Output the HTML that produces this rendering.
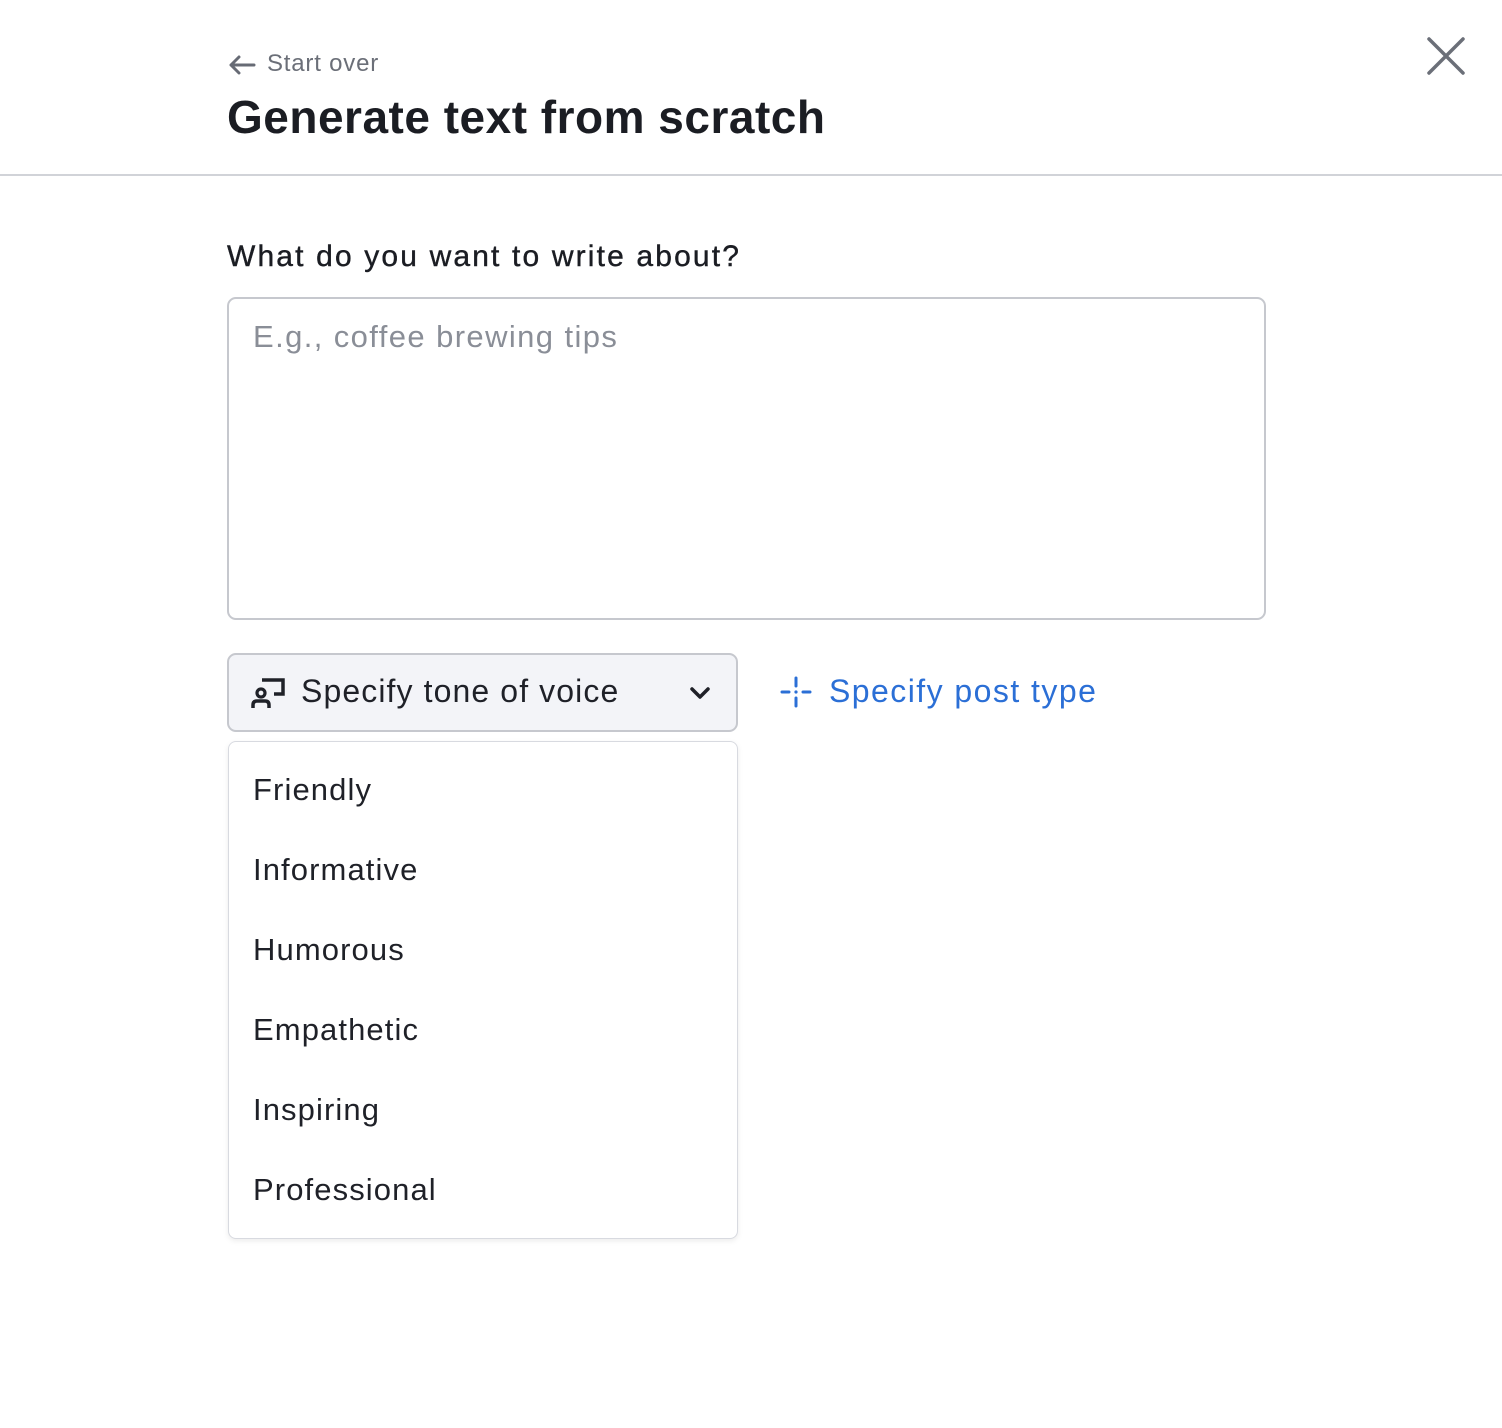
<!DOCTYPE html>
<html><head><meta charset="utf-8"><style>
*{box-sizing:border-box;margin:0;padding:0}
body{width:1502px;height:1428px;background:#fff;font-family:"Liberation Sans",sans-serif;color:#1f2128;position:relative;overflow:hidden}
.abs{position:absolute}
</style></head><body>
<svg class="abs" style="left:228px;top:54px" width="28" height="22" viewBox="0 0 28 22"><path d="M26 11H3M11 3L3 11L11 19" fill="none" stroke="#676b75" stroke-width="3" stroke-linecap="round" stroke-linejoin="round"/></svg>
<div class="abs" style="left:267px;top:50px;font-size:24px;color:#6b6f78;letter-spacing:0.8px">Start over</div>
<div class="abs" style="left:227px;top:90px;font-size:46px;font-weight:bold;color:#1b1d23;letter-spacing:0.5px">Generate text from scratch</div>
<svg class="abs" style="left:1427px;top:37px" width="38" height="38" viewBox="0 0 38 38"><path d="M2 2L36 36M36 2L2 36" stroke="#6b6f78" stroke-width="3.5" stroke-linecap="round"/></svg>
<div class="abs" style="left:0;top:174px;width:1502px;height:2px;background:#d1d3d8"></div>
<div class="abs" style="left:227px;top:240px;font-size:30px;font-weight:500;color:#1b1d23;letter-spacing:2.15px;-webkit-text-stroke:0.4px #1b1d23">What do you want to write about?</div>
<div class="abs" style="left:227px;top:297px;width:1039px;height:323px;border:2px solid #c6c8ce;border-radius:9px"></div>
<div class="abs" style="left:253px;top:319px;font-size:31px;color:#8a8e97;letter-spacing:1.4px">E.g., coffee brewing tips</div>
<div class="abs" style="left:227px;top:653px;width:511px;height:79px;border:2px solid #c6c8ce;border-radius:9px;background:#f3f4f8"></div>
<svg class="abs" style="left:250px;top:676px" width="36" height="34" viewBox="0 0 36 34"><path d="M12 4H33V18H24" fill="none" stroke="#1f2128" stroke-width="3.5"/><circle cx="11" cy="17" r="4" fill="none" stroke="#1f2128" stroke-width="3.2"/><path d="M3 32V29Q3 25 7 25H15Q19 25 19 29V32" fill="none" stroke="#1f2128" stroke-width="3.5"/></svg>
<div class="abs" style="left:301px;top:673px;font-size:32px;color:#1f2128;letter-spacing:1.1px">Specify tone of voice</div>
<svg class="abs" style="left:689px;top:685px" width="22" height="16" viewBox="0 0 22 16"><path d="M3 4L11 12L19 4" fill="none" stroke="#1f2128" stroke-width="3.5" stroke-linecap="round" stroke-linejoin="round"/></svg>
<svg class="abs" style="left:780px;top:676px" width="32" height="32" viewBox="0 0 32 32"><g stroke="#2b6fd6" stroke-width="3" stroke-linecap="round"><path d="M16 2V10M16 22V30M2 16H9M23 16H30"/></g><circle cx="16" cy="16" r="1.6" fill="#2b6fd6"/></svg>
<div class="abs" style="left:829px;top:673px;font-size:32px;color:#2b6fd6;letter-spacing:1.45px">Specify post type</div>
<div class="abs" style="left:228px;top:741px;width:510px;height:498px;border:1px solid #d8dae0;border-radius:8px;background:#fff;box-shadow:0 2px 6px rgba(0,0,0,0.08)"></div>
<div class="abs" style="left:253px;top:770px;font-size:31px;line-height:40px;color:#1f2128;letter-spacing:1.1px">
<div style="height:80px">Friendly</div>
<div style="height:80px">Informative</div>
<div style="height:80px">Humorous</div>
<div style="height:80px">Empathetic</div>
<div style="height:80px">Inspiring</div>
<div style="height:80px">Professional</div>
</div>
</body></html>
